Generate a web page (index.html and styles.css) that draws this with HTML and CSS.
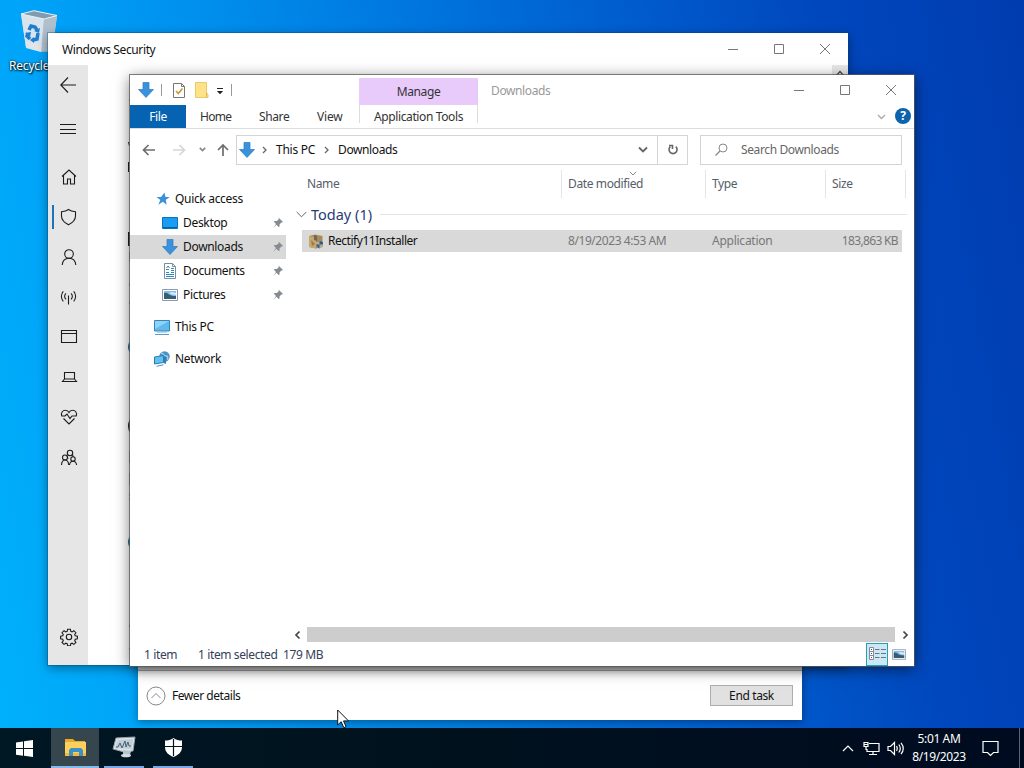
FILE: index.html
```html
<!DOCTYPE html>
<html lang="en">
<head>
    <meta charset="UTF-8">
    <meta name="viewport" content="width=device-width, initial-scale=1.0">
    <title>Desktop</title>
    <link rel="stylesheet" href="styles.css">
</head>
<body>
    <!-- shared icons -->
    <svg class="defs" width="0" height="0">
        <symbol id="down" viewBox="0 0 16 16"><path d="M5 .5h6v7h4.5L8 15.500.5 7.500H5z" fill="#3b92dc" stroke="#2b79bf" stroke-width=".7"/></symbol>
        <symbol id="pin" viewBox="0 0 12 12"><path d="M7 1l4 4-1 .5-.7-.1-1.800 2 .1 2-.9.7-2.300-2.300L1 11l3-4-2.200-2.200.8-.9 2 .1L6.700 2.500 6.500 1.600z" fill="#858b92"/></symbol>
        <symbol id="picture" viewBox="0 0 16 12"><path d="M.5.5h15v11H.5z" fill="#fff" stroke="#8b9bad"/><path d="M2 2h12v8H2z" fill="#84bced"/><path d="M2 4c3-1 4 1 6 2s4 1 6 1v3H2z" fill="#395d70"/><path d="M7 4l3-1 4 1v2l-4-.5z" fill="#d9edf9"/></symbol>
        <symbol id="max" viewBox="0 0 12 12"><path d="M1.500 1.500h9v9h-9z"/></symbol>
        <symbol id="close" viewBox="0 0 12 12"><path d="M1 1l10 10M11 1L1 11"/></symbol>
        <symbol id="min" viewBox="0 0 12 12"><path d="M1 6.500h10"/></symbol>
    </svg>

    <div class="desktop">
        <div class="recycle">
            <svg width="40" height="44" viewBox="0 0 40 44">
                <path d="M1 4l36 2-5 36-12-1-14-4z" fill="#c5d3df"/>
                <path d="M1 4l23 5-3 33-15-4z" fill="#d9e3eb"/>
                <path d="M24 9l13-3-5 34-11 2z" fill="#b0bfcc"/>
                <path d="M1 4L14 .7l23 4.800L24 9z" fill="#819cad" stroke="#e9f3f8"/>
                <path d="M6 32l16 3-1 7-13-4z" fill="#e6e6e4" opacity=".7"/>
                <g fill="none" stroke="#1c7ed0" stroke-width="3.500"><path d="M9 20l2-4 4 1 2 3"/><path d="M18 23l-1 6-4 1"/><path d="M10 29l-3-3 1-3"/></g>
                <path d="M14 21l5 2 1-5zM14 27v6l-4-3zM5 23l6-1-1 5z" fill="#1c7ed0"/>
            </svg>
            <span>Recycle Bin</span>
        </div>

        <!-- Task Manager -->
        <div class="window taskmgr">
            <div class="tm-list"></div>
            <div class="tm-footer">
                <svg width="20" height="20" viewBox="0 0 20 20" fill="none" stroke="#888"><circle cx="10" cy="10" r="9"/><path d="M5.500 12L10 7.500l4.500 4.500"/></svg>
                <span class="fewer">Fewer details</span>
                <button class="end-task">End task</button>
            </div>
        </div>

        <!-- Windows Security -->
        <div class="window security">
            <div class="sec-title">
                <span>Windows Security</span>
                <div class="caption">
                    <svg><use href="#min"/></svg>
                    <svg><use href="#max"/></svg>
                    <svg><use href="#close"/></svg>
                </div>
            </div>
            <div class="sec-body">
                <div class="sec-nav">
                    <div class="nav-item"><svg viewBox="0 0 18 18"><path d="M16 9H1M8 1.500L.8 9 8 16.500"/></svg></div>
                    <div class="nav-item menu"><svg viewBox="0 0 18 18"><path d="M0 4.500h16M0 9.500h16M0 13.500h16"/></svg></div>
                    <div class="nav-item home"><svg viewBox="0 0 18 18"><path d="M2 8.500l7-6.500 7 6.500M3.500 7.500v8.500h4v-5h3v5h4V7.500"/></svg></div>
                    <div class="nav-item active"><svg viewBox="0 0 18 18"><path d="M8.500 1.500c2 1.500 4.500 2 7 2.200V8c0 4-2.500 6.500-7 8.800C4 14.500 1.500 12 1.500 8V3.700c2.500-.2 5-.7 7-2.200z"/></svg></div>
                    <div class="nav-item"><svg viewBox="0 0 18 18"><circle cx="9" cy="6" r="4.300"/><path d="M2.200 17c.4-4 3-6.700 6.800-6.700s6.400 2.700 6.800 6.700"/></svg></div>
                    <div class="nav-item"><svg viewBox="0 0 18 18"><path d="M8.500 7.500v9M6 11.300a4 4 0 0 1 0-6M11 11.300a4 4 0 0 0 0-6M3.300 13.300a7.500 7.500 0 0 1 0-10M13.700 13.300a7.500 7.500 0 0 0 0-10"/></svg></div>
                    <div class="nav-item"><svg viewBox="0 0 18 18"><path d="M1.500 2.500h15v12h-15zM1.500 5.500h15"/></svg></div>
                    <div class="nav-item"><svg viewBox="0 0 18 18"><path d="M4.500 4.500h10v6.500h-10zM4.500 11l-2 2.500h14L14.500 11"/></svg></div>
                    <div class="nav-item"><svg viewBox="0 0 18 18"><path d="M1.800 8C.5 4.500 3 2 5.500 2.200 7.500 2.300 8.500 3.500 9 4.500c.5-1 1.500-2.200 3.500-2.300C15 2 17.500 4.500 16.200 8M1.500 8H5l2-2 3 4.500L12 8h4.500M3.500 10.500L9 16l5.500-5.500"/></svg></div>
                    <div class="nav-item family"><svg viewBox="0 0 18 18"><circle cx="10" cy="4" r="2.700"/><circle cx="5" cy="8.500" r="2.500"/><circle cx="13" cy="10" r="2.200"/><path d="M1.500 16c.2-3 1.500-5 3.500-5s3.500 2 3.700 5M9.500 16c.3-2.200 1.500-3.800 3.500-3.800s3.300 1.500 3.600 3.800M7 6.700l1 3M12.500 5.500l.7 2.300"/></svg></div>
                    <div class="nav-item gear"><svg viewBox="0 0 18 18"><circle cx="9" cy="9" r="2.700"/><path d="M7.600 1.200h2.800l.4 2.100 1.300.6 1.800-1.200 2 2-1.200 1.800.5 1.300 2.200.4v2.600l-2.200.5-.5 1.300 1.200 1.900-2 1.900-1.800-1.200-1.300.5-.4 2.200H7.600l-.4-2.200-1.400-.5-1.800 1.200-2-1.900 1.300-1.900-.6-1.300-2.100-.5V8.200l2.100-.4.6-1.300L2 4.700l2-2 1.800 1.200 1.400-.6z"/></svg></div>
                </div>
                <div class="sec-page">
                    <!-- left edges of the page content next to the front window -->
                    <svg class="edges" width="3" height="600" viewBox="0 0 3 600">
                        <g fill="#222"><path d="M0 77h1l1 4H1zM0 97h1v10H0zM0 167h2v14H0zM2 354q-4 7 0 14zM1 562l1-3v3z"/></g>
                        <g fill="#999"><path d="M1 34h1v2H1zM1 187h1v10H1zM1 218h1v3H1zM1 236h1v3H1zM1 386h1v12H1zM1 408h1v12H1zM1 429h1v2H1zM1 433h1v2H1zM1 583h1v2H1z"/></g>
                        <path d="M2 276q-4 6 0 12zM2 471q-4 6 0 12z" fill="#0067a8"/>
                    </svg>
                    <div class="scroll-up"><svg width="10" height="8" viewBox="0 0 10 8"><path d="M1 7l4-4.500L9 7" fill="none" stroke="#444" stroke-width="1.200"/></svg></div>
                </div>
            </div>
        </div>

        <!-- File Explorer -->
        <div class="window explorer">
            <div class="ribbon">
                <div class="quick">
                    <svg width="16" height="16"><use href="#down"/></svg>
                    <i class="sep"></i>
                    <svg class="props" width="12" height="15" viewBox="0 0 12 15"><path d="M.5.5h8l3 3v11H.5z" fill="#fff" stroke="#777"/><path d="M8.500.5v3h3" fill="none" stroke="#777"/><path d="M3 8l2.300 2.500L9.500 5.500" fill="none" stroke="#c89a3b" stroke-width="1.700"/></svg>
                    <svg class="folder" width="14" height="16" viewBox="0 0 14 16"><path d="M.5.5h11v10l1.500 2v3H.5z" fill="#ffe18a" stroke="#ecc967"/><path d="M11.500 10.500v5" stroke="#e2b94e"/></svg>
                    <svg class="drop" width="8" height="7" viewBox="0 0 8 7"><path d="M1 .5h6" stroke="#222"/><path d="M.8 3h6.400L4 6.300z" fill="#222"/></svg>
                    <i class="sep"></i>
                </div>
                <div class="manage">Manage</div>
                <div class="ex-title">
                    <span>Downloads</span>
                    <div class="caption">
                        <svg><use href="#min"/></svg>
                        <svg><use href="#max"/></svg>
                        <svg><use href="#close"/></svg>
                    </div>
                </div>
                <div class="tabs">
                    <span class="file">File</span>
                    <span class="tab-home">Home</span>
                    <span class="tab-share">Share</span>
                    <span class="tab-view">View</span>
                </div>
                <div class="apptools">Application Tools</div>
                <div class="ribbon-right">
                    <svg width="9" height="6" viewBox="0 0 9 6"><path d="M1 1l3.500 3.500L8 1" fill="none" stroke="#aaa" stroke-width="1.400"/></svg>
                    <span class="help">?</span>
                </div>
            </div>

            <div class="address-row">
                <div class="arrows">
                    <svg width="14" height="12" viewBox="0 0 14 12"><path d="M13 6H2M6.500 1L1.500 6l5 5" stroke="#6e6e6e"/></svg>
                    <svg class="forward" width="14" height="12" viewBox="0 0 14 12"><path d="M1 6h11M7.500 1l5 5-5 5" stroke="#d6d6d6"/></svg>
                    <svg class="recent" width="7" height="5" viewBox="0 0 7 5"><path d="M.8.8l2.700 2.700L6.200.8" stroke="#888"/></svg>
                    <svg class="up" width="12" height="13" viewBox="0 0 12 13"><path d="M6 13V2M1 7l5-5 5 5" stroke="#6e6e6e"/></svg>
                </div>
                <div class="address">
                    <svg width="16" height="16"><use href="#down"/></svg>
                    <svg class="chev" width="5" height="8" viewBox="0 0 5 8"><path d="M1 1l3 3-3 3"/></svg>
                    <span class="pc">This PC</span>
                    <svg class="chev" width="5" height="8" viewBox="0 0 5 8"><path d="M1 1l3 3-3 3"/></svg>
                    <span class="loc">Downloads</span>
                    <svg class="history" width="10" height="7" viewBox="0 0 10 7"><path d="M1 1.500l4 4 4-4" fill="none" stroke="#666" stroke-width="1.900"/></svg>
                    <div class="refresh"><svg width="12" height="13" viewBox="0 0 12 13"><path d="M8.800 3.700A4 4 0 1 1 3.300 3.700M2 2.500h3.500V6" fill="none" stroke="#666" stroke-width="1.600"/></svg></div>
                </div>
                <div class="search">
                    <svg width="13" height="13" viewBox="0 0 13 13"><circle cx="8" cy="5" r="4" fill="none" stroke="#888"/><path d="M5 8l-4.500 4.500" stroke="#888" stroke-width="1.200"/></svg>
                    <span>Search Downloads</span>
                </div>
            </div>

            <div class="ex-body">
                <div class="tree">
                    <div class="row top"><svg width="14" height="14" viewBox="0 0 14 14"><path d="M8.500.5l.8 4.300 4.400.4-3.900 2.600.8 4.900-3.700-3-4.600 3 2-4.800L.5 5h4.600z" fill="#3a91da"/></svg><span class="quick-access">Quick access</span></div>
                    <div class="row"><svg width="16" height="12" viewBox="0 0 16 12"><path d="M.5.5h15v11H.5z" fill="#1a9bf4" stroke="#0873c0"/><path d="M1 10.500h14" stroke="#0b5f9c"/></svg><span class="desk">Desktop</span><svg class="pin"><use href="#pin"/></svg></div>
                    <div class="row selected"><svg width="16" height="16"><use href="#down"/></svg><span class="down">Downloads</span><svg class="pin"><use href="#pin"/></svg></div>
                    <div class="row"><svg width="16" height="16" viewBox="0 0 16 16"><path d="M2.500.5h8l3 3v12h-11z" fill="#fff" stroke="#7e8c98"/><path d="M10.500.5v3h3" fill="none" stroke="#7e8c98"/><path d="M4 6.500h3M9 5.500h3M9 7.500h3M4 9.500h3M9 9.500h3M4 11.500h8M4 13.500h8M4.500 5l1.500-2 1.500 2" fill="none" stroke="#2b87c9"/></svg><span class="docs">Documents</span><svg class="pin"><use href="#pin"/></svg></div>
                    <div class="row"><svg width="16" height="12"><use href="#picture"/></svg><span class="pics">Pictures</span><svg class="pin"><use href="#pin"/></svg></div>
                    <div class="row root"><svg width="16" height="15" viewBox="0 0 16 15"><path d="M.5.5h15v10.500H.5z" fill="#5eb9ef" stroke="#3486b8"/><path d="M1 1h14L1 9z" fill="#8ed2f7"/><path d="M3 12.500h10" stroke="#b8d6e8"/><path d="M1 14.500h14" stroke="#5d9bc2"/></svg><span class="this-pc">This PC</span></div>
                    <div class="row root"><svg width="16" height="16" viewBox="0 0 16 16"><circle cx="10.500" cy="5.500" r="5.200" fill="#4c91c5"/><path d="M7 2c3 0 2 3 5 3s1 3 2 4" fill="none" stroke="#a2d0ed" stroke-width="1.300"/><path d="M.5 6l9-1.500v7l-9 1.500z" fill="#5fc0f2" stroke="#287fae"/><path d="M9.500 5l2.500 1v7l-2.500-1z" fill="#347fae"/><path d="M2.500 15.300l7-1.500" stroke="#4c91c5"/></svg><span class="net">Network</span></div>
                </div>
                <div class="files">
                    <div class="columns">
                        <span class="c-name">Name</span>
                        <span class="c-date">Date modified<svg class="sort" width="8" height="5" viewBox="0 0 8 5"><path d="M.8.8L4 4 7.200.8" fill="none" stroke="#888"/></svg></span>
                        <span class="c-type">Type</span>
                        <span class="c-size">Size</span>
                    </div>
                    <div class="group">
                        <svg width="11" height="7" viewBox="0 0 11 7"><path d="M.7 1l4.800 4.800L10.300 1" fill="none" stroke="#666"/></svg>
                        <span>Today (1)</span>
                        <i></i>
                    </div>
                    <div class="file-row">
                        <svg width="16" height="15" viewBox="0 0 16 15"><path d="M1 2l6-1.500L14.500 2v11L8 14.500 1 13z" fill="#a98a59"/><path d="M1 2l7 1.500v11L1 13z" fill="#c9a669"/><path d="M6 1l3 1v5l-3-1z" fill="#6f6858"/><path d="M3 6l4 4-3 2z" fill="#8f7d60"/><path d="M8 8l3.500-1L15 8c0 3-1 5-3.500 6.500C9 13 8 11 8 8z" fill="#245f98"/><path d="M11.500 7v3.500H15C14.500 12.500 13 14 11.500 14.500v-4H8V8z" fill="#bcae80"/></svg>
                        <span class="f-name">Rectify11Installer</span>
                        <span class="f-date">8/19/2023 4:53 AM</span>
                        <span class="f-type">Application</span>
                        <span class="f-size">183,863 KB</span>
                    </div>
                    <div class="hscroll">
                        <svg width="7" height="10" viewBox="0 0 7 10"><path d="M5.500 1.500L2 5l3.500 3.500"/></svg>
                        <i></i>
                        <svg width="7" height="10" viewBox="0 0 7 10"><path d="M1.500 1.500L5 5 1.500 8.500"/></svg>
                    </div>
                </div>
            </div>

            <div class="status">
                <span class="s-count">1 item</span>
                <span class="s-sel">1 item selected</span>
                <span class="s-size">179 MB</span>
                <div class="view-details"><svg width="17" height="14" viewBox="0 0 17 14"><path d="M.5.5h4v4h-4zM.5 4.500h4v4h-4zM.5 8.500h4v4h-4z" fill="#fff" stroke="#889"/><path d="M6 2.500h4.500M12 2.500h5M6 6.500h4.500M12 6.500h5M6 10.500h4.500M12 10.500h5" stroke="#678"/><path d="M2 2.500h1M2 6.500h1M2 10.500h1" stroke="#258"/></svg></div>
                <svg class="view-large" width="14" height="11"><use href="#picture"/></svg>
            </div>
        </div>

        <!-- taskbar -->
        <div class="taskbar">
            <div class="tb start"><svg width="17" height="17" viewBox="0 0 17 17"><path d="M0 2.400l7-1v6.700H0zM8 1.200L17 0v8.100H8zM0 9.100h7v6.600l-7-1zM8 9.100h9V17l-9-1.200z" fill="#fff"/></svg></div>
            <div class="tb current"><svg width="23" height="19" viewBox="0 0 23 19"><path d="M1 1h8l2 2h10v3H1z" fill="#e9a92b"/><path d="M1 4h21v14H1z" fill="#fbd05b"/><path d="M1 15h21v3H1z" fill="#f2b93c"/><path d="M5 18v-6l2-2h10l2 2v6h-4v-4H9v4z" fill="#3e91c8"/></svg></div>
            <div class="tb open"><svg width="24" height="22" viewBox="0 0 24 22"><path d="M4 2l19-1-2 14-9 1-11-3z" fill="#dce3e7" stroke="#94a1aa"/><path d="M6 4l15-1-1.500 10L3 12z" fill="#c3cdd4"/><path d="M4 11h2l2-4 2 5 3-7 1 6 2-5 1 4h2" fill="none" stroke="#3f657f"/><path d="M11 14l8 1-1 4h-7z" fill="#b9c3ca"/><ellipse cx="14" cy="19.500" rx="5" ry="1.800" fill="#d5dbdf"/></svg></div>
            <div class="tb open defender"><svg width="17" height="19" viewBox="0 0 17 19"><path d="M8.500 0C11 2 14 2.500 17 2.500V9c0 5-3.500 8-8.500 10C3.500 17 0 14 0 9V2.500C3 2.500 6 2 8.500 0z" fill="#fff"/><path d="M8.500 1v17M0 8.500h17" stroke="#03151f" stroke-width="1.200"/></svg></div>
            <div class="tray">
                <svg class="tray-up" width="12" height="8" viewBox="0 0 12 8"><path d="M1 7l5-5 5 5"/></svg>
                <svg class="tray-net" width="17" height="15" viewBox="0 0 17 15"><path d="M6 2.500h10v8H4V8M1 1.500h4v4H1zM3 5.500V9M10 10.500v3M6 13.500h8M1.500 3.500h3"/></svg>
                <svg class="tray-vol" width="18" height="15" viewBox="0 0 18 15"><path d="M1 5.500h2.500l4-4v12l-4-4H1zM9.500 5.200q1.500 2.300 0 4.600M11.800 3.500q3 4 0 8M14 1.800q4.500 5.700 0 11.400"/></svg>
                <div class="clock"><span class="time">5:01 AM</span><span class="date">8/19/2023</span></div>
                <svg class="tray-note" width="17" height="17" viewBox="0 0 17 17"><path d="M1 1.500h15v11h-4.500l-3 3-3-3H1z"/></svg>
                <i class="peek"></i>
            </div>
        </div>

        <svg class="cursor" width="13" height="20" viewBox="0 0 13 20"><path d="M.7 1v15l3.500-3.300 2.600 6 2.300-1-2.600-5.800h5z" fill="#fff" stroke="#111" stroke-width="1"/></svg>
    </div>
</body>
</html>
```

FILE: styles.css
```css
body {
    margin: 0;
    font-family: "Noto Sans", "Open Sans", sans-serif;
    font-size: 12px;
    letter-spacing: -0.38px;
    color: #111;
}

.defs {
    position: absolute;
}

svg {
    flex: none;
    display: block;
}

span {
    white-space: nowrap;
}

.desktop {
    position: relative;
    width: 1024px;
    height: 768px;
    overflow: hidden;
    background: linear-gradient(80deg, #00b1fb 0%, #00a3f8 14%, #0080e4 40%, #0060d0 63%, #0047bd 82%, #003cb0 100%);
}

.recycle {
    position: absolute;
    left: 9px;
    top: 10px;
    width: 62px;
    color: #fff;
    letter-spacing: -0.2px;
    text-shadow: 1px 1px 2px #000, 0 0 2px #000;
}

.recycle svg {
    margin-left: 11px;
}

.recycle span {
    display: block;
    line-height: 16px;
    margin-top: 4px;
}

.window {
    position: absolute;
    background: #fff;
    display: flex;
    flex-direction: column;
}

.caption {
    display: flex;
    gap: 34px;
    margin-left: auto;
}

.caption svg {
    width: 12px;
    height: 12px;
    fill: none;
    stroke: #777;
    stroke-width: 1;
}

/* task manager */
.taskmgr {
    left: 138px;
    top: 600px;
    width: 664px;
    height: 120px;
    box-shadow: 0 2px 8px rgba(0, 0, 0, 0.35);
}

.tm-list {
    height: 71px;
    background: #ddd;
    border-bottom: 1px solid #aaa;
    box-sizing: border-box;
}

.tm-footer {
    display: flex;
    align-items: center;
    height: 49px;
    padding: 0 9px 0 8px;
}

.fewer {
    margin-left: 6px;
    letter-spacing: -0.45px;
}

.end-task {
    margin-left: auto;
    width: 83px;
    height: 21px;
    padding: 0;
    border: 1px solid #adadad;
    background: #e1e1e1;
    font: inherit;
    letter-spacing: inherit;
    color: #111;
}

/* windows security */
.security {
    left: 48px;
    top: 33px;
    width: 800px;
    height: 632px;
    box-shadow: 0 0 0 1px rgba(0, 70, 120, 0.35), 0 3px 10px rgba(0, 0, 0, 0.4);
}

.sec-title {
    display: flex;
    align-items: center;
    height: 32px;
    padding: 0 17px 0 14px;
}

.sec-body {
    display: flex;
    flex: 1;
}

.sec-nav {
    display: flex;
    flex-direction: column;
    width: 40px;
    background: #e6e6e6;
}

.nav-item {
    display: flex;
    align-items: center;
    justify-content: center;
    height: 40px;
}

.nav-item svg {
    width: 18px;
    height: 18px;
    margin-left: 2px;
    fill: none;
    stroke: #1c1c1c;
    stroke-width: 1.1;
}

.nav-item.menu {
    margin-top: 4px;
}

.nav-item.home {
    margin-top: 8px;
}

.nav-item.active {
    background: linear-gradient(#1a73bd, #1a73bd) 4px 8px / 2px 24px no-repeat;
}

.nav-item.family {
    margin-top: 1px;
}

.nav-item.gear {
    margin-top: auto;
    margin-bottom: 8px;
}

.sec-page {
    display: flex;
    flex: 1;
    justify-content: space-between;
}

.edges {
    margin-left: 40px;
}

.scroll-up {
    width: 16px;
    height: 16px;
    padding: 4px 0 0 3px;
    box-sizing: border-box;
    background: #e8e8e8;
}

/* file explorer */
.explorer {
    left: 130px;
    top: 75px;
    width: 784px;
    height: 591px;
    box-shadow: 0 0 0 1px rgba(90, 90, 90, 0.75), 0 3px 14px rgba(0, 0, 0, 0.55);
}

.ribbon {
    display: grid;
    grid-template-columns: 229px 119px 1fr;
    grid-template-rows: 30px 23px;
    border-bottom: 1px solid #ddd;
    color: #333;
}

.quick {
    display: flex;
    align-items: center;
    padding-left: 8px;
}

.sep {
    width: 1px;
    height: 12px;
    margin-left: 7px;
    background: #999;
}

.props {
    margin-left: 11px;
}

.folder {
    margin-left: 10px;
}

.drop {
    margin-left: 7px;
    margin-top: 3px;
}

.manage {
    margin-top: 3px;
    background: #e8cafb;
    line-height: 28px;
    text-align: center;
}

.ex-title {
    display: flex;
    align-items: center;
    padding: 0 17px 0 13px;
    color: #999;
}

.tabs {
    display: flex;
    line-height: 24px;
}

.tabs .file {
    width: 56px;
    background: #0563b1;
    color: #fff;
    text-align: center;
}

.tab-home {
    margin-left: 14px;
    width: 59px;
    letter-spacing: -0.7px;
}

.tab-share {
    width: 58px;
}

.tab-view {
    letter-spacing: -0.2px;
}

.apptools {
    height: 18px;
    border: solid #dcdcdc;
    border-width: 0 1px;
    line-height: 24px;
    text-align: center;
    white-space: nowrap;
}

.ribbon-right {
    display: flex;
    align-items: center;
    justify-content: flex-end;
    padding-right: 3px;
}

.help {
    width: 16px;
    height: 16px;
    margin-left: 9px;
    margin-bottom: 2px;
    border-radius: 50%;
    background: #0d64ad;
    color: #fff;
    font-weight: bold;
    line-height: 16px;
    text-align: center;
}

.address-row {
    display: flex;
    align-items: center;
    height: 41px;
}

.address-row span {
    margin-top: -1px;
}

.arrows {
    display: flex;
    align-items: center;
    width: 94px;
    padding-left: 12px;
}

.arrows svg {
    fill: none;
    stroke-width: 1.7;
}

.forward {
    margin-left: 16px;
}

.recent {
    margin-left: 13px;
}

.up {
    margin-left: 11px;
}

.address {
    display: flex;
    align-items: center;
    width: 452px;
    height: 30px;
    box-sizing: border-box;
    border: 1px solid #d4d4d4;
    padding-left: 2px;
}

.chev {
    fill: none;
    stroke: #666;
    stroke-width: 1.3;
    margin-left: 7px;
}

.pc {
    margin-left: 9px;
    width: 41px;
    letter-spacing: -0.25px;
}

.loc {
    margin-left: 9px;
}

.history {
    margin-left: auto;
    margin-right: 9px;
}

.refresh {
    display: flex;
    align-items: center;
    justify-content: center;
    width: 29px;
    height: 28px;
    border-left: 1px solid #d4d4d4;
}

.search {
    display: flex;
    align-items: center;
    width: 202px;
    height: 30px;
    box-sizing: border-box;
    margin-left: 12px;
    padding-left: 14px;
    border: 1px solid #d4d4d4;
    color: #666;
}

.search span {
    margin-left: 13px;
}

.ex-body {
    display: flex;
    flex: 1;
}

.tree {
    width: 156px;
    padding-top: 17px;
}

.row {
    display: flex;
    align-items: center;
    height: 24px;
    padding-left: 32px;
}

.row span {
    margin-left: 5px;
    margin-top: -2px;
    letter-spacing: -0.32px;
}

.row.top,
.row.root {
    padding-left: 24px;
}

.row.top svg {
    margin-left: 2px;
}

.row.root {
    margin-top: 8px;
}

.row.selected {
    background: #d9d9d9;
}

.row .pin {
    width: 12px;
    height: 12px;
    margin-left: auto;
    margin-right: 2px;
}

.files {
    display: flex;
    flex-direction: column;
    width: 628px;
}

.columns {
    display: flex;
    height: 28px;
    line-height: 28px;
    padding-left: 21px;
    color: #555d68;
}

.columns span {
    box-sizing: border-box;
    border-right: 1px solid #e5e5e5;
    position: relative;
}

.c-name {
    width: 255px;
}

.c-date {
    width: 144px;
    padding-left: 6px;
}

.c-type {
    width: 120px;
    padding-left: 6px;
}

.c-size {
    width: 80px;
    padding-left: 6px;
}

.sort {
    position: absolute;
    left: 67px;
    top: 1px;
}

.group {
    display: flex;
    align-items: center;
    height: 32px;
    padding: 1px 7px 0 10px;
    box-sizing: border-box;
    color: #2b3a78;
    font-size: 14.5px;
    letter-spacing: 0;
}

.group span {
    margin-left: 4px;
    margin-top: -2px;
}

.group i {
    flex: 1;
    height: 1px;
    margin-left: 8px;
    background: #e3e3e3;
}

.file-row {
    display: flex;
    align-items: center;
    height: 22px;
    width: 600px;
    margin-left: 16px;
    box-sizing: border-box;
    padding: 0 4px 0 6px;
    background: #d9d9d9;
    color: #777;
}

.file-row span {
    margin-top: -2px;
}

.f-name {
    width: 240px;
    margin-left: 4px;
    color: #111;
    letter-spacing: -0.46px;
}

.f-date {
    width: 144px;
    letter-spacing: -0.43px;
}

.f-type {
    letter-spacing: -0.25px;
}

.f-size {
    margin-left: auto;
    letter-spacing: -0.65px;
}

.hscroll {
    display: flex;
    align-items: center;
    height: 15px;
    margin-top: auto;
    padding: 0 5px 0 8px;
}

.hscroll svg {
    fill: none;
    stroke: #444;
    stroke-width: 1.7;
}

.hscroll i {
    flex: 1;
    height: 15px;
    margin: 0 7px 0 6px;
    background: #cdcdcd;
}

.status {
    display: flex;
    align-items: center;
    height: 24px;
    padding-left: 14px;
    color: #33415c;
}

.s-count {
    width: 54px;
}

.s-sel {
    width: 85px;
}

.view-details {
    display: flex;
    align-items: center;
    justify-content: center;
    width: 20px;
    height: 21px;
    margin-left: auto;
    border: 1px solid #26a0b5;
    background: #cce8f4;
}

.view-large {
    margin: 0 8px 0 4px;
}

/* taskbar */
.taskbar {
    position: absolute;
    left: 0;
    top: 728px;
    width: 1024px;
    height: 40px;
    display: flex;
    background: linear-gradient(90deg, #001724, #00121e 40%, #000b20);
    color: #fff;
}

.tb {
    display: flex;
    align-items: center;
    justify-content: center;
    box-sizing: border-box;
    height: 40px;
}

.start {
    width: 48px;
}

.current {
    width: 48px;
    margin-left: 3px;
    background: #35464f;
    border-bottom: 2px solid #85b9ee;
}

.open {
    width: 40px;
    margin-left: 5px;
    border-bottom: 2px solid #78a9e4;
}

.defender {
    margin-left: 9px;
}

.tray {
    display: flex;
    align-items: center;
    margin-left: auto;
}

.tray svg {
    fill: none;
    stroke: #fff;
    stroke-width: 1.2;
}

.tray-net {
    margin-left: 9px;
}

.tray-vol {
    margin-left: 7px;
}

.clock {
    display: flex;
    flex-direction: column;
    align-items: center;
    width: 54px;
    margin-left: 7px;
    line-height: 18px;
    margin-top: -1px;
}

.tray-note {
    margin-left: 16px;
}

.peek {
    width: 1px;
    height: 40px;
    margin-left: 20px;
    margin-right: 4px;
    background: #52677b;
}

.cursor {
    position: absolute;
    left: 337px;
    top: 709px;
}
```
